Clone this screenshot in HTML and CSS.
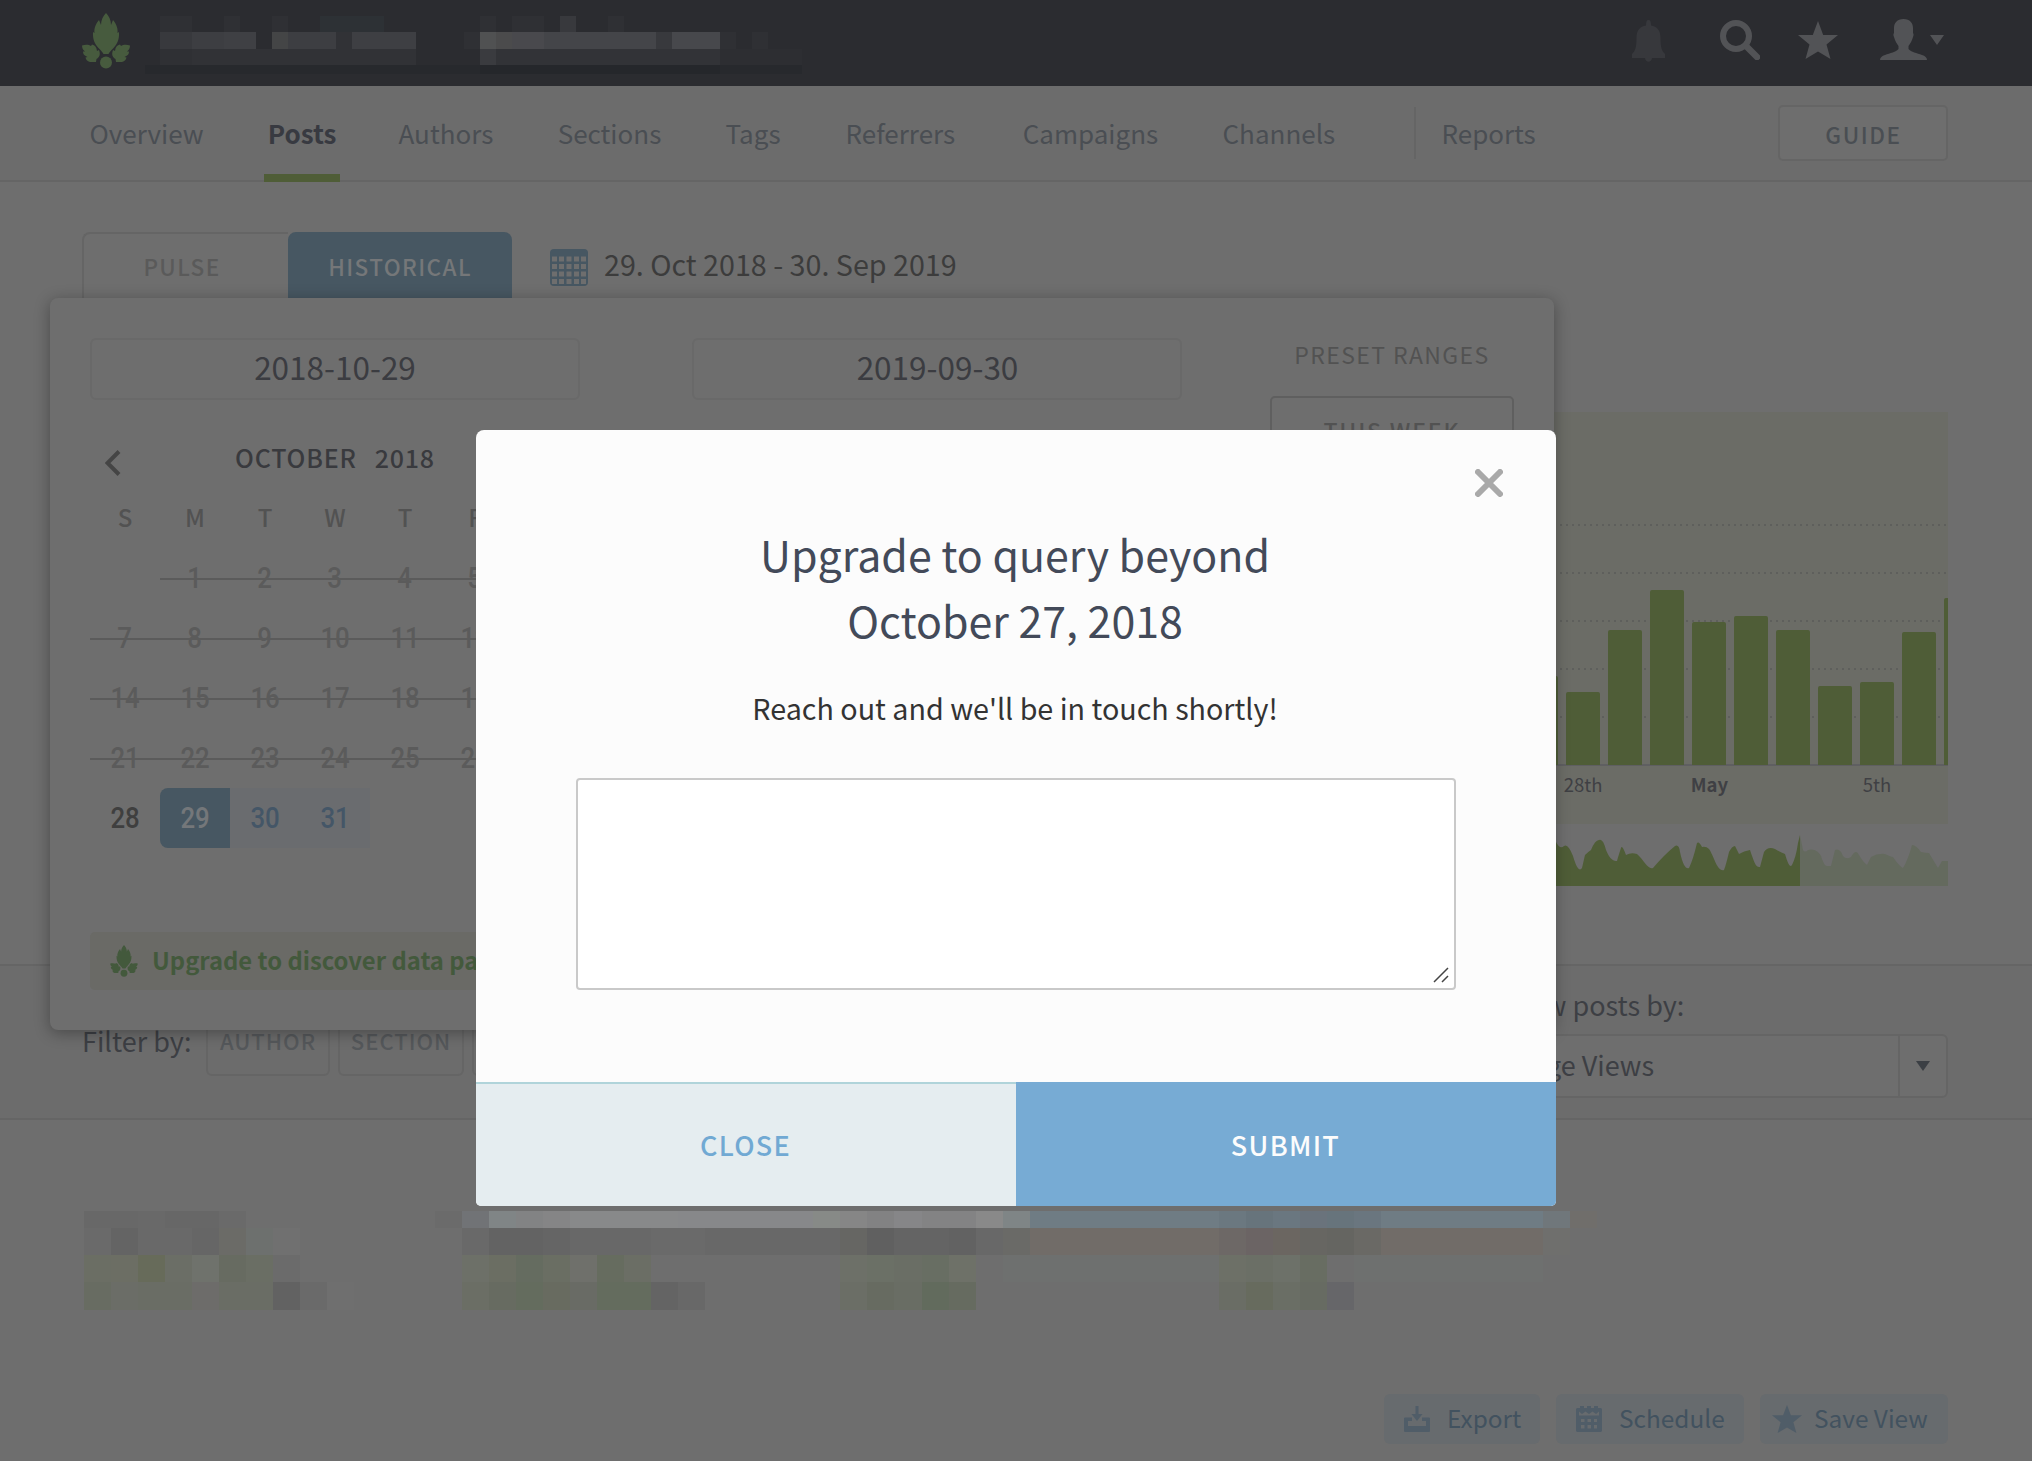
FILE: index.html
```html
<!DOCTYPE html>
<html lang="en">
<head>
<meta charset="utf-8">
<title>Posts</title>
<link rel="stylesheet" href="styles.css">
</head>
<body>
<svg class="defs" width="0" height="0">
  <symbol id="leaf" viewBox="0 0 48 56">
    <path d="M24 0C27 3 29 7 29 12L31 7C35 12 36 16 35.500 20L37 19C37.500 27 35 31 31.500 35C28.500 38 27 40 26.500 41H21.500C21 40 19.500 38 16.500 35C13 31 10.500 27 11 19L12.500 20C12 16 13 12 17 7L19 12C19 7 21 3 24 0Z"/>
    <path d="M0 32.500C3 31.500 7 31.500 9 33L10 31.500C13 32 14.500 34 15 38L17 37C18.500 41 18 44 14.500 46L14 49H8C5 48.500 4 46.500 3.500 44.500L5.500 44C2 42.500 1 41 1 38.500L3 38.500C1 37 0 35 0 32.500Z"/>
    <path d="M48 32.500C45 31.500 41 31.500 39 33L38 31.500C35 32 33.500 34 33 38L31 37C29.500 41 30 44 33.500 46L34 49H40C43 48.500 44 46.500 44.500 44.500L42.500 44C46 42.500 47 41 47 38.500L45 38.500C47 37 48 35 48 32.500Z"/>
    <ellipse cx="24" cy="49.500" rx="6" ry="6"/>
  </symbol>
  <symbol id="star" viewBox="0 0 40 38">
    <path d="M20 0L25.200 14H40L28.500 23.500L32.500 38L20 30.500L7.500 38L11.500 23.500L0 14H14.800Z"/>
  </symbol>
</svg>

<header class="topbar">
  <svg class="logo"><use href="#leaf"/></svg>
  <svg class="site-name" viewBox="0 0 657 58" shape-rendering="crispEdges">
    <g fill="#2f3034"><rect x="15" width="32" height="16"/><rect x="79" width="16" height="16"/><rect x="127" width="16" height="16"/><rect x="335" width="16" height="16"/><rect x="367" width="32" height="16"/><rect x="463" width="16" height="16"/><rect x="319" y="16" width="16" height="17"/><rect x="575" y="16" width="16" height="17"/><rect x="607" y="16" width="16" height="17"/><rect x="15" y="33" width="32" height="16"/></g>
    <rect x="175" width="64" height="16" fill="#2d3135"/><rect x="415" width="16" height="16" fill="#38393d"/>
    <rect x="15" y="16" width="32" height="17" fill="#38393d"/><rect x="47" y="16" width="32" height="17" fill="#3d3e42"/><rect x="79" y="16" width="32" height="17" fill="#3f4044"/><rect x="127" y="16" width="16" height="17" fill="#444546"/><rect x="143" y="16" width="48" height="17" fill="#3d3e42"/><rect x="191" y="16" width="16" height="17" fill="#313236"/><rect x="207" y="16" width="64" height="17" fill="#3e3f43"/>
    <rect x="335" y="16" width="16" height="17" fill="#505152"/><rect x="351" y="16" width="16" height="17" fill="#4b4b4c"/><rect x="367" y="16" width="32" height="17" fill="#49494d"/><rect x="399" y="16" width="112" height="17" fill="#444549"/><rect x="511" y="16" width="16" height="17" fill="#38393d"/><rect x="527" y="16" width="48" height="17" fill="#47484c"/>
    <rect x="47" y="33" width="224" height="16" fill="#313236"/><rect x="335" y="33" width="16" height="16" fill="#3a3b3f"/><rect x="351" y="33" width="224" height="16" fill="#323337"/><rect x="575" y="33" width="82" height="16" fill="#2d2e32"/>
    <rect y="49" width="657" height="9" fill="#27292d"/><rect x="335" y="49" width="240" height="9" fill="#25272b"/>
  </svg>
  <div class="tools">
    <svg class="bell" viewBox="0 0 33 42"><path d="M16.500 0C18.500 0 19 2 19 5.500C25 6.500 28.500 10 28.500 18C28.500 28 30 31 33 34V38H20C19.500 43 13.500 43 13 38H0V34C3 31 4.500 28 4.500 18C4.500 10 8 6.500 14 5.500C14 2 14.500 0 16.500 0Z"/></svg>
    <svg class="search" viewBox="0 0 40 40"><circle cx="16" cy="16" r="13" fill="none" stroke-width="6"/><path d="M27 27L37 37" stroke-width="6.500" stroke-linecap="round"/></svg>
    <svg class="fav"><use href="#star"/></svg>
    <svg class="user" viewBox="0 0 64 41"><path d="M23.500 0C30 0 33 4 33 9V14C34 15 33.500 17 33 18C32 22 30 25 28.500 27V30C31 33 37 34 42 36C45 37 47 38.500 47 41H0C0 38.500 2 37 5 36C10 34 16 33 18.500 30V27C17 25 15 22 14 18C13.500 17 13 15 14 14V9C14 4 17 0 23.500 0ZM50 16H64L57 26Z"/></svg>
  </div>
</header>

<nav class="nav">
  <a>Overview</a><a class="active">Posts</a><a>Authors</a><a>Sections</a><a>Tags</a><a class="referrers">Referrers</a><a>Campaigns</a><a>Channels</a>
  <span class="split"></span>
  <a>Reports</a>
  <button class="guide">GUIDE</button>
</nav>

<main>
  <div class="range">
    <div class="tab pulse">PULSE</div>
    <div class="tab historical">HISTORICAL</div>
    <svg class="cal" viewBox="0 0 38 37"><rect width="38" height="37" rx="4"/><g fill="#6e6e6e"><path d="M2 7.500h5v5h-5zM9 7.500h5v5h-5zM16.500 7.500h5v5h-5zM24 7.500h5v5h-5zM31 7.500h5v5h-5zM2 15h5v5h-5zM9 15h5v5h-5zM16.500 15h5v5h-5zM24 15h5v5h-5zM31 15h5v5h-5zM2 22.500h5v5h-5zM9 22.500h5v5h-5zM16.500 22.500h5v5h-5zM24 22.500h5v5h-5zM31 22.500h5v5h-5zM2 30h5v5h-5zM9 30h5v5h-5zM16.500 30h5v5h-5zM24 30h5v5h-5zM31 30h5v5h-5z"/></g></svg>
    <span class="range-text">29. Oct 2018 - 30. Sep 2019</span>
  </div>

  <svg class="chart" viewBox="84 412 1864 474">
    <rect x="84" y="412" width="1864" height="412" fill="#6b6c66"/>
    <g stroke="#5e5f5c" stroke-width="2" stroke-dasharray="2 4"><path d="M1560 525H1948M1560 573H1948M1560 621H1948M1560 669H1948M1560 717H1948"/></g>
    <path d="M84 765H1948" stroke="#5f5f61" stroke-width="2"/>
    <g fill="#4f5d37">
      <path d="M1524 765V678q0-2 2-2h30q2 0 2 2V765zM1566 765V694q0-2 2-2h30q2 0 2 2V765zM1608 765V632q0-2 2-2h30q2 0 2 2V765zM1650 765V592q0-2 2-2h30q2 0 2 2V765zM1692 765V624q0-2 2-2h30q2 0 2 2V765zM1734 765V618q0-2 2-2h30q2 0 2 2V765zM1776 765V632q0-2 2-2h30q2 0 2 2V765zM1818 765V688q0-2 2-2h30q2 0 2 2V765zM1860 765V684q0-2 2-2h30q2 0 2 2V765zM1902 765V634q0-2 2-2h30q2 0 2 2V765zM1944 765V600q0-2 2-2h2V765z"/>
      <path d="M1540 886V852L1556 842Q1560 850 1564 846Q1568 843 1573 856C1577 870 1580 871 1582 868L1585 855Q1588 852 1591 850Q1595 840 1599 840Q1603 838 1606 850C1610 860 1614 861 1617 861Q1618 857 1621 848Q1622 844 1626 855Q1631 852 1637 854C1644 860 1648 870 1653 868Q1664 855 1675 846Q1679 844 1680 852C1683 866 1686 869 1689 868Q1693 860 1697 843Q1699 841 1702 847Q1706 846 1709 849C1714 856 1717 872 1724 870Q1726 865 1729 852Q1732 846 1735 846L1739 854Q1744 851 1750 850C1754 862 1756 868 1760 867L1764 852Q1768 846 1775 849Q1780 852 1785 854C1788 864 1790 868 1792 865Q1796 857 1798 843L1800 835V886Z"/>
    </g>
    <path fill="#646a5e" d="M1800 886V835L1803 850Q1805 853 1808 850C1814 848 1819 852 1821 856Q1824 866 1827 866H1831L1835 850Q1840 848 1843 856Q1846 860 1851 857Q1856 848 1859 855Q1863 862 1867 865L1871 857Q1878 853 1885 854Q1891 857 1893 857Q1899 866 1903 868Q1908 860 1912 845Q1916 845 1921 852Q1926 853 1929 853L1938 868L1942 861H1948V886Z"/>
    <g class="axis"><text x="1583" y="792">28th</text><text x="1709.500" y="792" class="month">May</text><text x="1877" y="792">5th</text></g>
  </svg>

  <section class="filters">
    <div class="filter-by"><span>Filter by:</span><button>AUTHOR</button><button>SECTION</button><button></button></div>
    <div class="sort">
      <label>Show posts by:</label>
      <div class="select"><span>Page Views</span><i><svg viewBox="0 0 14 10"><path d="M0 0H14L7 10Z"/></svg></i></div>
    </div>
  </section>

  <svg class="posts" viewBox="0 0 61 99" preserveAspectRatio="none" shape-rendering="crispEdges"></svg>

  <div class="actions">
    <button class="export"><svg viewBox="0 0 26 26"><path d="M11.500 0h3v8h4L13 15L7.500 8h4zM1 11.500H8V15H4V20H22V15H18V11.500H25Q26 11.500 26 12.500V25Q26 26 25 26H1Q0 26 0 25V12.500Q0 11.500 1 11.500Z"/></svg>Export</button>
    <button class="schedule"><svg viewBox="0 0 26 26"><path fill-rule="evenodd" d="M1 2H4V0H8V2H11V0H15V2H18V0H22V2H25L26 3V25L25 26H1L0 25V3ZM3 5.500V9.500H23V5.500L20 8L16.500 5.500L13 8L9.500 5.500L6 8ZM5 13V16H8.500V13ZM11.500 13V16H15V13ZM18 13V16H21V13ZM5 19V22.500H8.500V19ZM11.500 19V22.500H15V19ZM18 19V22.500H21V19Z"/></svg>Schedule</button>
    <button class="save"><svg viewBox="0 0 40 38" preserveAspectRatio="none"><use href="#star"/></svg>Save View</button>
  </div>

  <div class="picker">
    <div class="picker-inputs">
      <div class="date">2018-10-29</div>
      <div class="date">2019-09-30</div>
      <div class="presets"><span>PRESET RANGES</span><button>THIS WEEK</button></div>
    </div>
    <div class="month-head">
      <svg viewBox="0 0 16 26"><path d="M14 1.500L2.500 13L14 24.500" fill="none" stroke="#454545" stroke-width="4"/></svg>
      <span class="m">OCTOBER</span><span class="y">2018</span>
    </div>
    <div class="week names"><b>S</b><b>M</b><b>T</b><b>W</b><b>T</b><b>F</b></div>
    <div class="week"><b></b><b class="off"><i>1</i></b><b class="off"><i>2</i></b><b class="off"><i>3</i></b><b class="off"><i>4</i></b><b class="off"><i>5</i></b></div>
    <div class="week"><b class="off"><i>7</i></b><b class="off"><i>8</i></b><b class="off"><i>9</i></b><b class="off"><i>10</i></b><b class="off"><i>11</i></b><b class="off"><i>12</i></b></div>
    <div class="week"><b class="off"><i>14</i></b><b class="off"><i>15</i></b><b class="off"><i>16</i></b><b class="off"><i>17</i></b><b class="off"><i>18</i></b><b class="off"><i>19</i></b></div>
    <div class="week"><b class="off"><i>21</i></b><b class="off"><i>22</i></b><b class="off"><i>23</i></b><b class="off"><i>24</i></b><b class="off"><i>25</i></b><b class="off"><i>26</i></b></div>
    <div class="week"><b><i>28</i></b><b class="start"><i>29</i></b><b class="in"><i>30</i></b><b class="in"><i>31</i></b></div>
    <div class="upgrade"><svg><use href="#leaf"/></svg><span>Upgrade to discover data past</span></div>
  </div>
</main>

<div class="modal">
  <svg class="close-x" viewBox="0 0 28 28"><path d="M3 3L25 25M25 3L3 25" stroke="#a9a9a9" stroke-width="6" stroke-linecap="round"/></svg>
  <h1>Upgrade to query beyond<br>October 27, 2018</h1>
  <p>Reach out and we'll be in touch shortly!</p>
  <div class="message"><svg viewBox="0 0 16 16"><path d="M1 15L15 1M9 15L15 9" stroke="#444" stroke-width="1.500"/></svg></div>
  <div class="modal-actions"><button class="close">CLOSE</button><button class="submit">SUBMIT</button></div>
</div>
<script src="posts.js"></script>
</body>
</html>
```
FILE: styles.css
```css
* { box-sizing: border-box; }
body { margin: 0; width: 2032px; height: 1461px; overflow: hidden; position: relative; background: #6e6e6e; color: #3d3f44; font-family: "Noto Sans CJK SC", "Noto Sans", sans-serif; font-size: 26px; }
button { font: inherit; border: 0; padding: 0; background: none; color: inherit; }
svg { display: block; }
.defs { position: absolute; }

.topbar { height: 86px; background: #2b2c30; padding: 0 84px 0 82px; display: flex; align-items: flex-start; }
.logo { width: 48px; height: 56px; margin: 13px 15px 0 0; fill: #475b3e; }
.site-name { width: 657px; height: 58px; margin-top: 16px; }
.tools { margin-left: auto; display: flex; fill: #525356; }
.bell { width: 33px; height: 42px; margin: 20px 55px 0 0; fill: #37383c; }
.search { width: 40px; height: 40px; margin: 20px 38px 0 0; stroke: #525356; }
.fav { width: 40px; height: 38px; margin: 21px 42px 0 0; }
.user { width: 64px; height: 41px; margin: 19px 4px 0 0; }

.nav { height: 96px; background: #6c6c6c; border-bottom: 2px solid #656565; padding: 0 84px 0 89.500px; display: flex; align-items: center; color: #4a4e53; }
.nav a { margin-right: 64.300px; line-height: 94px; }
.nav .active { height: 96px; margin: 2px 58px 0 -4px; padding: 0 4px; border-bottom: 8px solid #4f5d37; font-weight: 700; color: #383a41; }
.nav .referrers { margin-right: 67.500px; }
.nav a:nth-child(5) { margin-right: 65px; }
.split { width: 2px; height: 52px; background: #656565; margin: 0 26px 0 14px; }
.guide { margin-left: auto; width: 170px; height: 56px; border: 2px solid #656565; border-radius: 5px; background: #6e6e6e; font-weight: 500; font-size: 22.500px; letter-spacing: 1.600px; padding: 2px 0 0 1px; }

main { padding: 50px 84px 0 82px; }
.range { display: flex; height: 66px; }
.tab { line-height: 68px; text-align: center; font-weight: 500; font-size: 22.500px; letter-spacing: 1.400px; border-radius: 8px 8px 0 0; }
.pulse { width: 206px; padding-right: 8px; border: 2px solid #656565; border-width: 2px 0 0 2px; line-height: 64px; color: #5a5a5a; border-top-right-radius: 0; }
.historical { width: 224px; background: #475762; color: #757779; }
.cal { width: 38px; height: 37px; margin: 17px 16px 0 38px; fill: #475762; }
.range-text { font-size: 28.700px; line-height: 63px; color: #3c3c3c; }

.chart { width: 1864px; height: 474px; margin: 114px 0 0 2px; }
.axis { font-size: 18.500px; fill: #3f4044; text-anchor: middle; }
.month { font-weight: 700; }

.filters { height: 156px; margin: 78px -84px 0 -82px; padding: 0 84px 0 82px; background: #6c6c6c; border: 2px solid #656565; border-width: 2px 0; display: flex; justify-content: space-between; }
.filter-by { display: flex; align-items: center; height: 66px; margin-top: 44px; font-size: 27px; }
.filter-by span { width: 124px; line-height: 66px; margin-top: -4px; }
.filter-by button { height: 66px; width: 124px; padding: 0 0 6px; margin-right: 8px; border: 2px solid #656565; border-radius: 6px; font-size: 22px; font-weight: 500; letter-spacing: 1px; color: #55585b; }
.filter-by button + button { width: 126px; }
.sort { width: 452px; font-size: 27px; }
.sort label { display: block; line-height: 40px; margin: 19px 0 9px; }
.select { height: 64px; border: 2px solid #656565; border-radius: 6px; background: #6e6e6e; display: flex; line-height: 58px; }
.select span { flex: 1; padding-left: 17px; }
.select i { width: 48px; border-left: 2px solid #656565; display: flex; align-items: center; justify-content: center; }
.select svg { width: 14px; height: 10px; fill: #3b3f44; }

.posts { width: 1648px; height: 99px; margin: 91px 0 0 2px; }

.actions { display: flex; justify-content: flex-end; gap: 16px; margin-top: 84px; color: #42525f; font-size: 24.400px; }
.actions button { height: 50px; border-radius: 6px; background: #676b6e; display: flex; align-items: center; padding-left: 20px; line-height: 46px; padding-bottom: 2px; }
.actions svg { width: 26px; height: 26px; margin: 2px 17px 0 0; fill: #505d68; }
.export { width: 156px; }
.schedule { width: 188px; }
.actions .save { width: 188px; padding-left: 12px; }
.actions .save svg { width: 30px; height: 28px; margin-right: 12px; }

.picker { position: absolute; left: 50px; top: 298px; width: 1504px; height: 732px; padding: 40px; border-radius: 8px; background: #6e6e6e; box-shadow: 0 3px 16px rgba(0,0,0,.33); }
.picker-inputs { display: flex; height: 90px; }
.date { width: 490px; height: 62px; margin-right: 112px; border: 2px solid #696969; border-radius: 6px; text-align: center; font-size: 31.500px; line-height: 53px; color: #3b3c41; }
.date + .date { margin-right: 88px; padding-left: 1px; }
.presets { width: 244px; text-align: center; font-size: 23px; color: #525252; letter-spacing: 1.400px; }
.presets span { display: block; line-height: 32px; margin-bottom: 26px; }
.presets button { width: 244px; height: 68px; border: 2px solid #5f5f5f; border-radius: 5px; font-weight: 500; letter-spacing: 1.800px; }
.month-head { display: flex; height: 60px; align-items: center; color: #393a3e; font-weight: 500; font-size: 25px; margin-bottom: 16px; letter-spacing: .800px; line-height: 56px; }
.month-head svg { width: 16px; height: 26px; margin: 10px 114px 0 15px; }
.month-head span { margin-top: -3px; }
.month-head .m { margin-right: 18px; }
.week { display: flex; width: 420px; height: 60px; font-family: Roboto, "Noto Sans", sans-serif; font-weight: 500; font-size: 30px; color: #5b5b5b; }
.week b { width: 70px; font-weight: inherit; text-align: center; line-height: 60px; }
.week i { display: inline-block; font-style: normal; transform: scaleX(.86); }
.week .off { background: linear-gradient(#5b5b5b, #5b5b5b) 0 30px / 100% 2px no-repeat; }
.names { height: 44px; font-family: inherit; font-size: 24px; color: #525252; }
.names b { line-height: 25px; }
.week b:not([class]) { color: #3f3f3f; }
.names b:not([class]) { color: #525252; }
.week .start { background: #475762; color: #74777a; border-radius: 8px 0 0 8px; }
.week .in { background: #6a6c6f; color: #445667; }
.upgrade { margin-top: 84px; height: 58px; border-radius: 5px; background: #6a6a66; display: flex; align-items: center; padding-left: 20px; color: #43593c; font-weight: 700; font-size: 23.800px; }
.upgrade span { line-height: 54px; margin-top: -3px; }
.upgrade svg { width: 28px; height: 32px; margin-right: 14px; fill: #43593c; }

.modal { position: absolute; left: 476px; top: 430px; width: 1080px; height: 776px; border-radius: 8px 8px 5px 5px; background: #fcfcfc; text-align: center; }
.close-x { position: absolute; right: 53px; top: 39px; width: 28px; height: 28px; }
h1 { margin: 0 2px 0 0; padding-top: 90px; font-weight: 400; font-size: 42.900px; line-height: 66px; color: #434a59; }
p { margin: 38px 2px 0 0; font-size: 28.700px; line-height: 36px; color: #333; }
.message { margin: 52px 100px 0; height: 212px; border: 2px solid #c9c9c9; border-radius: 4px; background: #fff; display: flex; justify-content: flex-end; align-items: flex-end; padding: 5px; }
.message svg { width: 16px; height: 16px; }
.modal-actions { position: absolute; left: 0; right: 0; bottom: 0; height: 124px; display: flex; font-weight: 500; font-size: 27px; }
.modal-actions button { width: 540px; padding-right: 1px; letter-spacing: 1.300px; }
.modal-actions .close { padding-bottom: 1px; background: #e5edf0; border-top: 2px solid #b0d4da; color: #71a9d3; border-bottom-left-radius: 5px; }
.submit { background: #77abd4; color: #fcfcfc; border-bottom-right-radius: 5px; }
```
FILE: posts.js
```js
// Each row: y, height, then "column:span:colour" tiles of the blurred post list.
const rows = [
  [0, 17, "0:2:686868 2:1:696969 3:2:676767 5:1:6a6a6a 13:1:6b6b6b 14:1:717376 15:1:808586 16:1:828384 17:1:858586 18:4:88898a 22:5:87888a 27:1:878a87 28:1:868686 29:1:828283 30:1:868688 31:2:838384 33:1:898989 34:1:7f8586 35:7:6f7c84 42:1:6b7880 43:1:67747c 44:1:6a7780 45:1:6a737c 46:1:67747c 47:1:6a767f 48:6:6f7c84 54:1:70777b 55:1:706e6b"],
  [17, 27, "0:1:6a6a6a 1:1:646464 2:2:696969 4:1:666666 5:1:6b6b67 6:1:6d706e 7:1:707070 14:1:696969 15:2:636363 17:1:656565 18:3:686868 21:2:6a6a6a 23:5:686868 28:1:666663 29:1:606060 30:2:646464 32:1:626262 33:1:686868 34:1:6a6a67 35:7:716c68 42:1:6d6866 43:1:6b6464 44:1:6b6661 45:1:676662 46:1:656561 47:1:6a6965 48:6:716c68 54:1:6f6f6d"],
  [44, 27, "0:1:6b6e64 1:1:6c6e64 2:1:676b5a 3:1:6b6e66 4:1:6f726c 5:1:676b61 6:1:6a6e64 7:1:6b6b6b 14:1:6d7068 15:1:6b6e63 16:1:656c60 17:1:6a6e63 18:1:6f706b 19:1:666c5f 20:1:6b6e65 28:1:6d7068 29:1:6b7066 30:1:6a6e65 31:1:686e63 32:1:6e7168 34:8:6e706f 42:1:6d7067 43:1:6b6f66 44:1:6d7169 45:1:686d62 47:7:6e706f"],
  [71, 28, "0:1:686c62 1:1:6b6d67 2:2:6a6d65 4:1:6d6c6a 5:2:6a6d65 7:1:626262 8:1:6a6a6a 9:1:6f6f6f 14:1:6b6e65 15:1:676b61 16:1:646c5e 17:1:686b60 18:1:696b65 19:2:646c5e 21:1:646464 22:1:686868 28:1:6b6e66 29:1:676b61 30:1:696d64 31:1:626b5d 32:1:666b60 42:1:6a6d65 43:1:676b5e 44:1:6a6e65 45:1:676b62 46:1:666669"]
];
const svg = document.querySelector(".posts");
for (const [y, h, tiles] of rows) {
  for (const tile of tiles.split(" ")) {
    const [x, w, colour] = tile.split(":");
    const rect = document.createElementNS("http://www.w3.org/2000/svg", "rect");
    for (const [k, v] of Object.entries({ x, y, width: w, height: h, fill: "#" + colour })) rect.setAttribute(k, v);
    svg.append(rect);
  }
}
```
